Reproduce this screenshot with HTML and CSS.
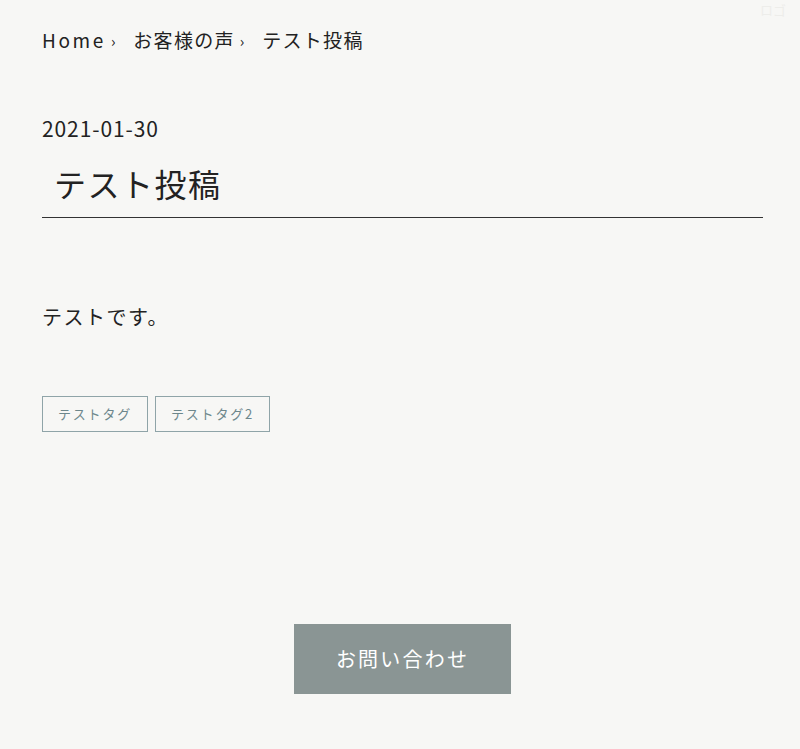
FILE: index.html
```html
<!DOCTYPE html>
<html lang="ja">
<head>
  <meta charset="UTF-8">
  <meta name="viewport" content="width=device-width, initial-scale=1.0">
  <title>テスト投稿</title>
  <link rel="stylesheet" href="styles.css">
</head>
<body>
  <div class="corner">ロゴ</div>
  <main class="page">
    <!-- パンくず -->
    <nav class="breadcrumb">
      <a class="home" href="#">Home</a><span class="sep">›</span>
      <a href="#">お客様の声</a><span class="sep">›</span>
      <span>テスト投稿</span>
    </nav>

    <!-- 記事 -->
    <article class="post">
      <div class="post-date">2021-01-30</div>
      <h1 class="post-title">テスト投稿</h1>
      <div class="post-body">
        <p>テストです。</p>
      </div>
      <ul class="tags">
        <li><a href="#">テストタグ</a></li>
        <li><a href="#">テストタグ2</a></li>
      </ul>
    </article>

    <div class="contact">
      <a class="contact-btn" href="#">お問い合わせ</a>
    </div>
  </main>
</body>
</html>
```

FILE: styles.css
```css
html, body {
  margin: 0;
  background: #f7f7f5;
  color: #222;
  font-family: "Noto Sans CJK JP", "Noto Sans", sans-serif;
}

a {
  color: inherit;
  text-decoration: none;
}

.corner {
  position: absolute;
  top: 2px;
  right: 14px;
  font-size: 13px;
  line-height: 16px;
  color: #ededea;
}

.page {
  width: 721px;
  margin-left: 42px;
  padding-top: 26px;
}

.breadcrumb {
  font-size: 19px;
  letter-spacing: 1.3px;
  line-height: 28px;
}

.breadcrumb .home {
  letter-spacing: 2.6px;
}

.breadcrumb .sep {
  font-size: 15px;
  margin: 0 11px 0 5px;
  vertical-align: 1px;
}

.post {
  margin-top: 58px;
}

.post-date {
  font-size: 21px;
  letter-spacing: 0.9px;
  line-height: 30px;
}

.post-title {
  margin: 17px 0 0;
  padding: 0 0 11px 12px;
  font-size: 32px;
  font-weight: 400;
  letter-spacing: 1.5px;
  line-height: 46px;
  border-bottom: 1px solid #333;
}

.post-body {
  margin-top: 83px;
  font-size: 20px;
  letter-spacing: 1.5px;
}

.post-body p {
  margin: 0;
  line-height: 32px;
}

.tags {
  list-style: none;
  margin: 63px 0 0;
  padding: 0;
  display: flex;
  gap: 7px;
}

.tags a {
  display: block;
  padding: 0 15px;
  border: 1px solid #8fa4a8;
  color: #6d878c;
  font-size: 13px;
  letter-spacing: 1.8px;
  line-height: 34px;
}

.contact {
  display: flex;
  justify-content: center;
  margin-top: 192px;
}

.contact-btn {
  display: block;
  width: 217px;
  line-height: 70px;
  text-align: center;
  background: #8a9594;
  color: #fff;
  font-size: 20px;
  letter-spacing: 2.2px;
}
```
